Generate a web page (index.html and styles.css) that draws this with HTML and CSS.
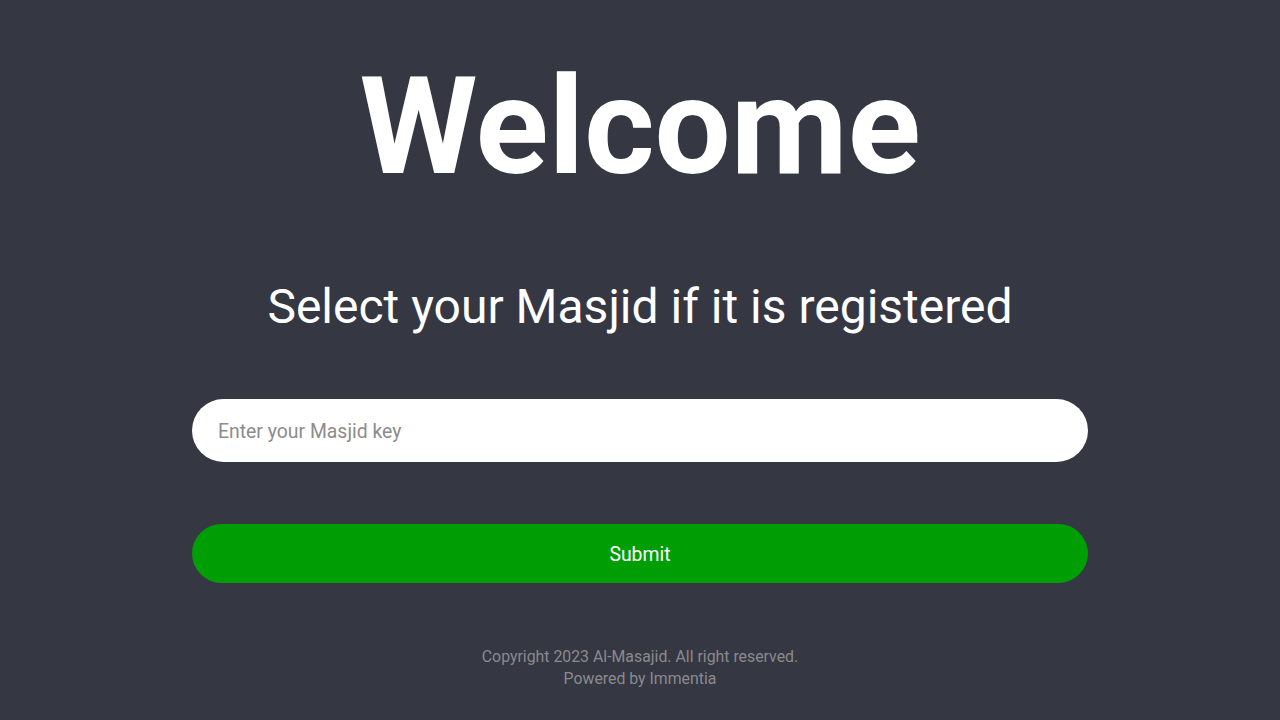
FILE: index.html
```html
<!DOCTYPE html>
<html lang="en">
<head>
<meta charset="utf-8">
<title>Welcome</title>
<link rel="stylesheet" href="styles.css">
</head>
<body>
<main class="page">
  <h1 class="title">Welcome</h1>
  <h2 class="subtitle">Select your Masjid if it is registered</h2>
  <form class="form">
    <input class="key-input" type="text" placeholder="Enter your Masjid key">
    <button class="submit" type="button">Submit</button>
  </form>
  <footer class="footer">
    <p>Copyright 2023 Al-Masajid. All right reserved.</p>
    <p>Powered by Immentia</p>
  </footer>
</main>
</body>
</html>
```
FILE: styles.css
```css
html, body {
  margin: 0;
  padding: 0;
  background: #353743;
  font-family: Roboto, "Noto Sans", sans-serif;
}
.page {
  width: 896px;
  margin: 0 auto;
  display: flex;
  flex-direction: column;
  align-items: center;
  padding-top: 47px;
}
.title {
  margin: 0;
  color: #ffffff;
  font-size: 135px;
  font-weight: 700;
  line-height: 160px;
}
.subtitle {
  margin: 72px 0 0;
  color: #ffffff;
  font-size: 48px;
  font-weight: 400;
  line-height: 56px;
}
.form {
  width: 100%;
  display: flex;
  flex-direction: column;
  gap: 62px;
  margin-top: 64px;
}
.key-input {
  box-sizing: border-box;
  width: 100%;
  height: 63px;
  border: none;
  border-radius: 32px;
  padding: 2px 26px 0;
  font-family: Roboto, sans-serif;
  font-size: 19.4px;
  color: #333;
  background: #fff;
  outline: none;
}
.key-input::placeholder {
  color: #8c8c8c;
}
.submit {
  width: 100%;
  height: 59px;
  border: none;
  border-radius: 30px;
  padding: 2px 0 0;
  background: #009e05;
  color: #fff;
  font-family: Roboto, sans-serif;
  font-size: 19.4px;
}
.footer {
  margin-top: 63px;
  text-align: center;
  color: #8a8a8e;
  font-size: 15.85px;
  line-height: 22px;
}
.footer p {
  margin: 0;
}
```
